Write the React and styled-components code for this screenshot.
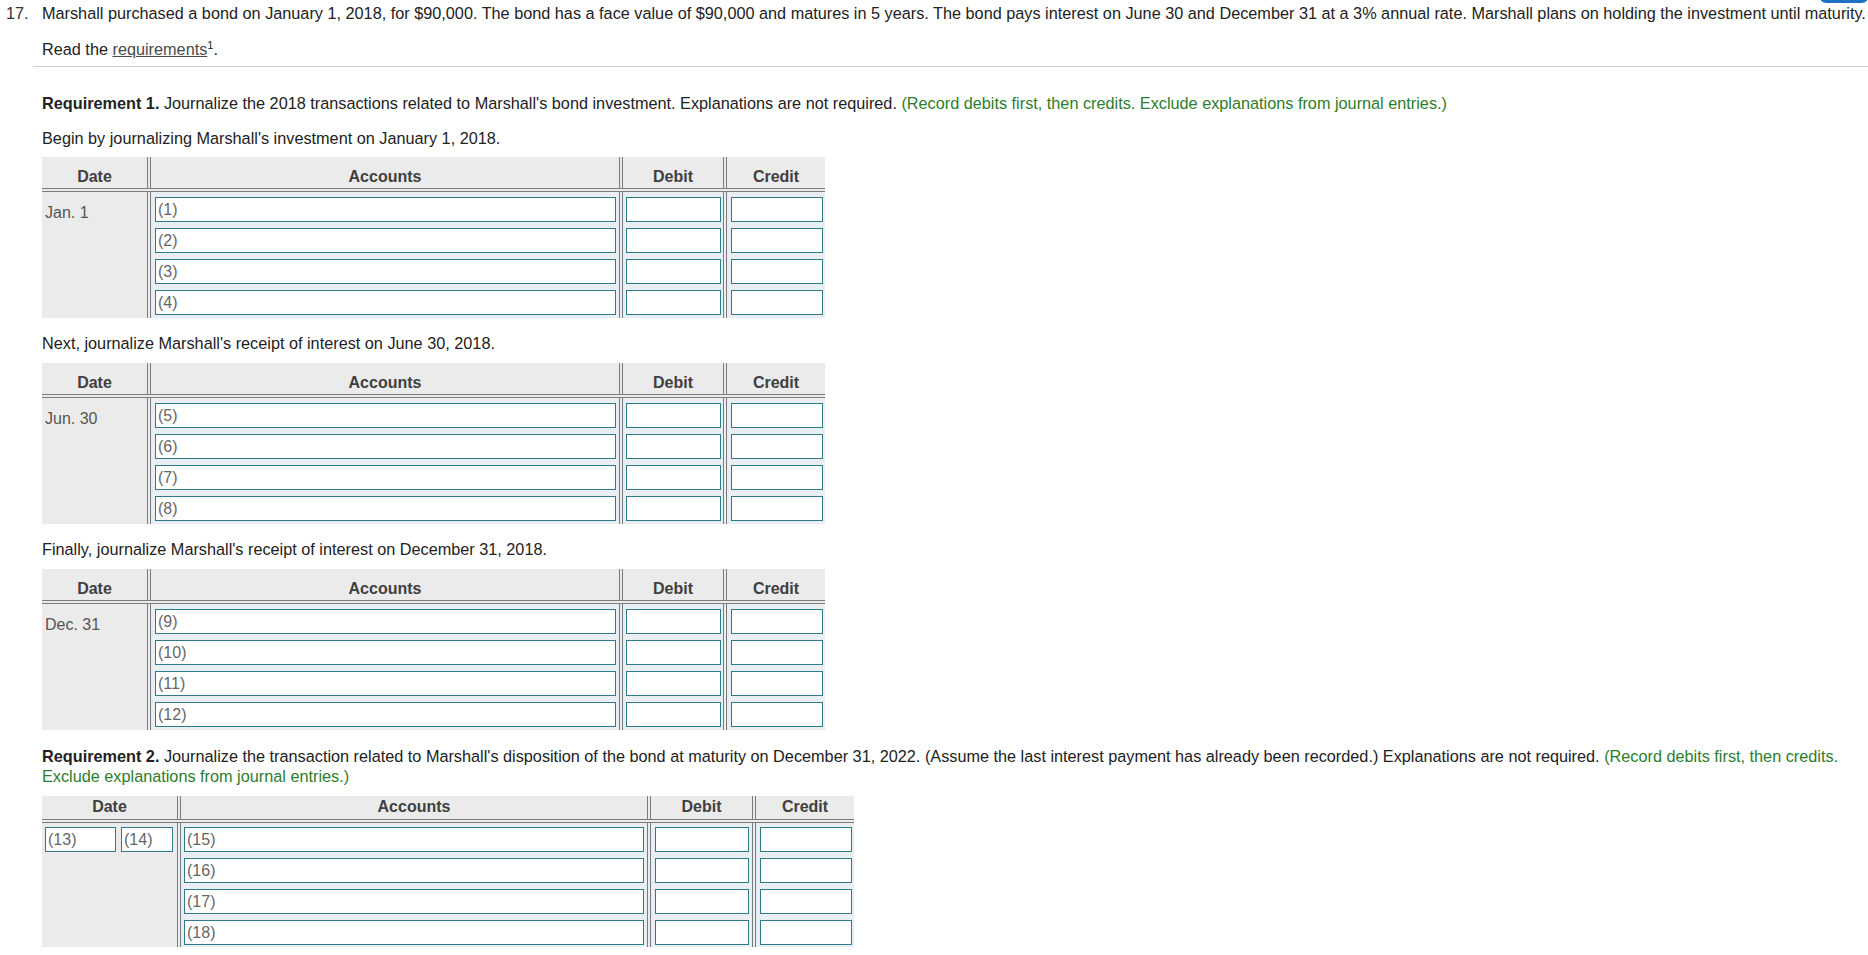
import React from 'react';
import styled, { createGlobalStyle } from 'styled-components';

const GlobalStyle = createGlobalStyle`
  body {
    margin: 0;
    background: #fff;
    color: #222;
    font-family: "Liberation Sans", Arial, sans-serif;
    font-size: 16.25px;
  }
`;

// table layouts: column widths include the 4px double divider on the left
const STANDARD = {
  cols: [105, 472, 104, 102],
  pads: [
    [4, 3],
    [3, 2],
    [4, 2],
  ],
  tall: true,
  bodyTop: 5,
  bodyBottom: 3,
};
const DISPOSAL = {
  cols: [135, 470, 105, 102],
  pads: [
    [3, 3],
    [4, 3],
    [4, 2],
  ],
  tall: false,
  bodyTop: 4,
  bodyBottom: 2,
};

const JournalTable = ({ layout, date, dateFields, nums, top }) => {
  const [dateW, ...entryW] = layout.cols;
  return (
    <Table $top={top}>
      <HeadRow $tall={layout.tall}>
        <HeadCell $w={dateW} $first $tall={layout.tall}>
          Date
        </HeadCell>
        {['Accounts', 'Debit', 'Credit'].map((label, i) => (
          <HeadCell key={label} $w={entryW[i]} $tall={layout.tall}>
            {label}
          </HeadCell>
        ))}
      </HeadRow>
      <Body>
        <DateCell $w={dateW} $fields={!!dateFields}>
          {dateFields
            ? dateFields.map((f) => <Entry key={f.n} placeholder={`(${f.n})`} $w={f.w} readOnly />)
            : date}
        </DateCell>
        {entryW.map((w, i) => (
          <EntryCol
            key={i}
            $w={w}
            $l={layout.pads[i][0]}
            $r={layout.pads[i][1]}
            $top={layout.bodyTop}
            $bottom={layout.bodyBottom}
          >
            {nums.map((n) => (
              <Entry key={n} placeholder={i === 0 ? `(${n})` : ''} readOnly />
            ))}
          </EntryCol>
        ))}
      </Body>
    </Table>
  );
};

const App = () => {
  return (
    <>
      <GlobalStyle />
      <Page>
        <Corner />
        <QuestionRow>
          <Num>17.</Num>
          <span>
            Marshall purchased a bond on January 1, 2018, for $90,000. The bond has a face value of $90,000 and
            matures in 5 years. The bond pays interest on June 30 and December 31 at a 3% annual rate. Marshall
            plans on holding the investment until maturity.
          </span>
        </QuestionRow>
        <ReadLine>
          Read the <ReqLink>requirements</ReqLink>
          <Sup>1</Sup>.
        </ReadLine>
        <Rule />
        <Section>
          <Para $top={26}>
            <b>Requirement 1.</b> Journalize the 2018 transactions related to Marshall's bond investment.
            Explanations are not required. <Hint>(Record debits first, then credits. Exclude explanations from journal entries.)</Hint>
          </Para>
          <Para $top={15}>Begin by journalizing Marshall's investment on January 1, 2018.</Para>
          <JournalTable layout={STANDARD} top={9} date="Jan. 1" nums={[1, 2, 3, 4]} />

          <Para $top={15}>Next, journalize Marshall's receipt of interest on June 30, 2018.</Para>
          <JournalTable layout={STANDARD} top={10} date="Jun. 30" nums={[5, 6, 7, 8]} />

          <Para $top={15}>Finally, journalize Marshall's receipt of interest on December 31, 2018.</Para>
          <JournalTable layout={STANDARD} top={10} date="Dec. 31" nums={[9, 10, 11, 12]} />

          <Para $top={16}>
            <b>Requirement 2.</b> Journalize the transaction related to Marshall's disposition of the bond at
            maturity on December 31, 2022. (Assume the last interest payment has already been recorded.)
            Explanations are not required. <Hint>(Record debits first, then credits.</Hint>
            <br />
            <Hint>Exclude explanations from journal entries.)</Hint>
          </Para>
          <JournalTable
            layout={DISPOSAL}
            top={10}
            dateFields={[
              { n: 13, w: 71 },
              { n: 14, w: 52 },
            ]}
            nums={[15, 16, 17, 18]}
          />
        </Section>
      </Page>
    </>
  );
};
export default App;

// STYLE
const Page = styled.div`
  position: relative;
  padding-top: 3px;
  line-height: 20px;
`;
const Corner = styled.div`
  position: absolute;
  top: -18px;
  right: 0;
  width: 48px;
  height: 21px;
  background: #1f6fc5;
  border-radius: 6px;
`;
const QuestionRow = styled.div`
  display: flex;
  white-space: nowrap;
`;
const Num = styled.span`
  width: 36px;
  padding-left: 6px;
  color: #333;
  flex-shrink: 0;
`;
const ReadLine = styled.div`
  margin-top: 16px;
  padding-left: 42px;
`;
const ReqLink = styled.span`
  color: #4a4a4a;
  text-decoration: underline;
`;
const Sup = styled.sup`
  font-size: 11px;
  line-height: 0;
`;
const Rule = styled.hr`
  margin: 7px 0 0 33px;
  border: 0;
  border-top: 1px solid #cfcfcf;
`;
const Section = styled.div`
  padding-left: 42px;
`;
const Para = styled.p`
  margin: ${(props) => props.$top}px 0 0;
  line-height: 20px;
`;
const Hint = styled.span`
  color: #2d7d2d;
`;
const Table = styled.div`
  margin-top: ${(props) => props.$top}px;
  width: fit-content;
`;
const HeadRow = styled.div`
  display: flex;
  height: ${(props) => (props.$tall ? '31px' : '23px')};
  background: #ebebeb;
  border-bottom: 4px double #7b7b7b;
`;
const HeadCell = styled.div`
  width: ${(props) => props.$w}px;
  box-sizing: border-box;
  border-left: ${(props) => (props.$first ? 'none' : '4px double #7b7b7b')};
  padding-top: ${(props) => (props.$tall ? '9px' : '0')};
  text-align: center;
  font-size: 16px;
  font-weight: bold;
  line-height: 22px;
  color: #404040;
`;
const Body = styled.div`
  display: flex;
`;
const DateCell = styled.div`
  width: ${(props) => props.$w}px;
  box-sizing: border-box;
  display: flex;
  align-items: flex-start;
  gap: 5px;
  padding: ${(props) => (props.$fields ? '4px 3px' : '11px 3px')};
  background: #ebebeb;
  color: #555;
  font-size: 16px;
  line-height: 20px;
`;
const EntryCol = styled.div`
  width: ${(props) => props.$w}px;
  box-sizing: border-box;
  display: flex;
  flex-direction: column;
  gap: 6px;
  padding: ${(props) => `${props.$top}px ${props.$r}px ${props.$bottom}px ${props.$l}px`};
  border-left: 4px double #7b7b7b;
  background: #e8eef1;
`;
const Entry = styled.input`
  width: ${(props) => (props.$w ? `${props.$w}px` : '100%')};
  height: 25px;
  box-sizing: border-box;
  margin: 0;
  padding: 0 2px;
  border: 1px solid #2e7c8a;
  border-radius: 0;
  background: #fff;
  font-family: "Liberation Sans", Arial, sans-serif;
  font-size: 16px;
  outline: none;
  &::placeholder {
    color: #666;
  }
`;
